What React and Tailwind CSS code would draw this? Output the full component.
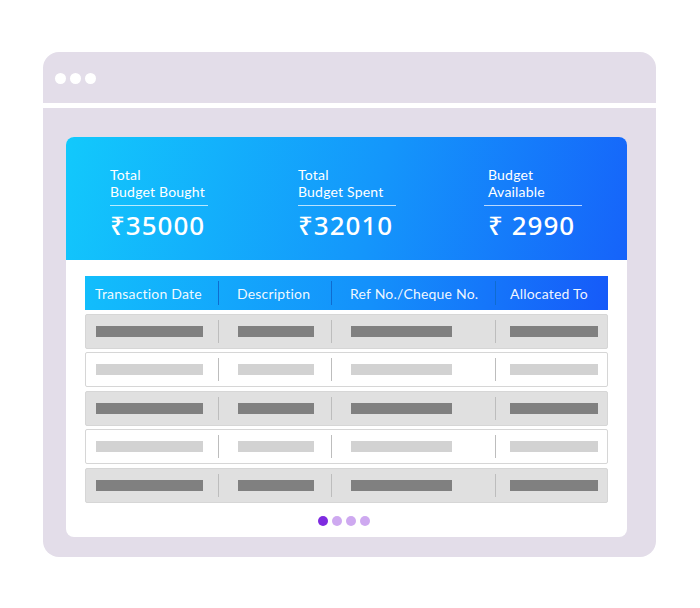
const stats = [
  { top: "Total", bottom: "Budget Bought", amount: "₹35000", ml: "ml-[44px]", pad: "" },
  { top: "Total", bottom: "Budget Spent", amount: "₹32010", ml: "ml-[90px]", pad: "" },
  { top: "Budget", bottom: "Available", amount: "₹ 2990", ml: "ml-[88px]", pad: "pl-[4px]" },
];

const cols = [
  { label: "Transaction Date", w: "w-[134px]", rw: "w-[133px]", tx: "pl-[10px]", bar: "ml-[10px] w-[107px]" },
  { label: "Description", w: "w-[113px]", rw: "w-[113px]", tx: "pl-[18px]", bar: "ml-[19px] w-[76px]" },
  { label: "Ref No./Cheque No.", w: "w-[164px]", rw: "w-[164px]", tx: "pl-[18px]", bar: "ml-[19px] w-[101px]" },
  { label: "Allocated To", w: "flex-1", rw: "flex-1", tx: "pl-[14px]", bar: "ml-[14px] w-[88px]" },
];

function Row({ dark }) {
  return (
    <div
      className={`flex h-[35px] items-center rounded-[2px] border border-[#d6d6d6] ${
        dark ? "bg-[#e0e0e0]" : "bg-white"
      }`}
    >
      {cols.map((c, i) => (
        <div
          key={i}
          className={`${c.rw} flex h-[23px] items-center ${i < 3 ? "border-r border-[#bdbdbd]" : ""}`}
        >
          <div className={`${c.bar} h-[11px] ${dark ? "bg-[#808080]" : "bg-[#d2d2d2]"}`} />
        </div>
      ))}
    </div>
  );
}

export default function App() {
  return (
    <div className="min-h-[608px] bg-white pl-[43px] pt-[52px] font-['Lato','Noto_Sans',sans-serif]">
      <div className="flex h-[505px] w-[613px] flex-col overflow-hidden rounded-[16px] bg-[#e3dde9]">
        <div className="flex h-[51px] items-center gap-[4px] pl-[12px] pt-[2px]">
          <span className="h-[11px] w-[11px] rounded-full bg-white" />
          <span className="h-[11px] w-[11px] rounded-full bg-white" />
          <span className="h-[11px] w-[11px] rounded-full bg-white" />
        </div>
        <div className="h-[5px] bg-white" />

        <div className="ml-[23px] mt-[29px] flex h-[400px] w-[561px] flex-col overflow-hidden rounded-[8px] bg-white">
          <div className="flex h-[123px] bg-[linear-gradient(105deg,#12c9fc_0%,#1496fb_55%,#1663fa_100%)] pt-[29px] text-white">
            {stats.map((s, i) => (
              <div key={i} className={`${s.ml} w-[98px]`}>
                <div className={`${s.pad} text-[14px] leading-[17px] tracking-[0.2px]`}>
                  <div>{s.top}</div>
                  <div>{s.bottom}</div>
                </div>
                <div className="mt-[5px] h-px bg-white/70" />
                <div className={`${s.pad} mt-[3px] font-['Noto_Sans',sans-serif] text-[26px] leading-[32px] font-medium tracking-[1px] whitespace-nowrap`}>
                  {s.amount}
                </div>
              </div>
            ))}
          </div>

          <div className="mx-[19px] mt-[16px] flex flex-col gap-[3.5px]">
            <div className="flex h-[34px] items-center bg-[linear-gradient(100deg,#12befc_0%,#1490fb_55%,#165af9_100%)] text-[14px] tracking-[0.2px] text-white/95">
              {cols.map((c, i) => (
                <div
                  key={i}
                  className={`${c.w} ${c.tx} flex h-[24px] items-center whitespace-nowrap ${
                    i < 3 ? "border-r border-[#0f6cd0]" : ""
                  }`}
                >
                  {c.label}
                </div>
              ))}
            </div>
            <Row dark />
            <Row />
            <Row dark />
            <Row />
            <Row dark />
          </div>

          <div className="mt-[13px] flex justify-center gap-[4px] pr-[6px]">
            <span className="h-[10px] w-[10px] rounded-full bg-[#7e2be0]" />
            <span className="h-[10px] w-[10px] rounded-full bg-[#cea9f0]" />
            <span className="h-[10px] w-[10px] rounded-full bg-[#cea9f0]" />
            <span className="h-[10px] w-[10px] rounded-full bg-[#cea9f0]" />
          </div>
        </div>
      </div>
    </div>
  );
}
